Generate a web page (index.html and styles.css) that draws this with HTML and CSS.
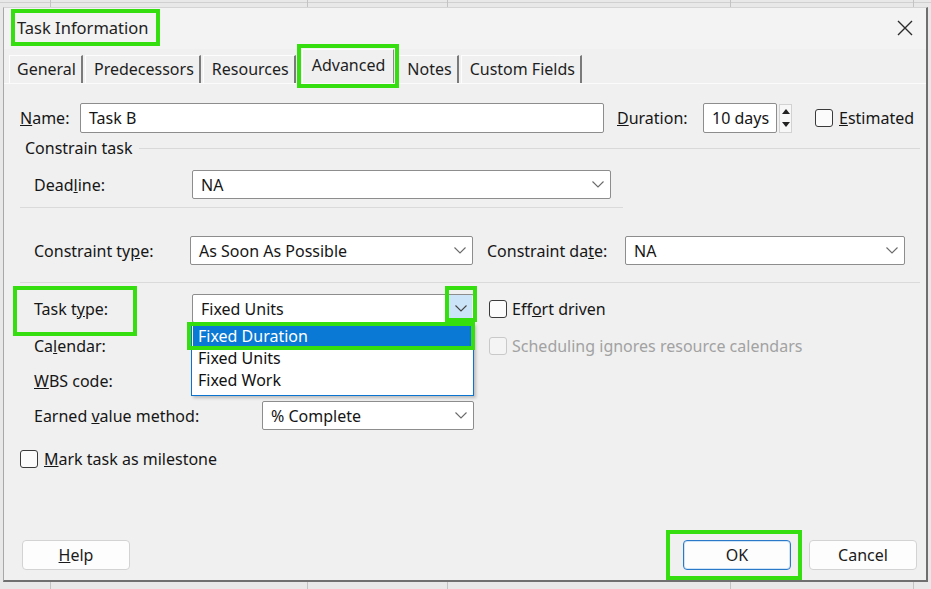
FILE: index.html
```html
<!DOCTYPE html>
<html>
<head>
    <title>Task Information</title>
    <link rel="stylesheet" href="styles.css">
</head>
<body>
  <div class="dialog">
    <div class="titlebar">
        <span class="title">Task Information</span>
        <span class="close">
            <svg width="16" height="16" viewBox="0 0 16 16"><path d="M1 1L15 15M15 1L1 15" stroke="#2b2b2b" stroke-width="1.4" fill="none"/></svg>
        </span>
    </div>

    <div class="tabs">
        <span class="tab first">General</span>
        <span class="tab">Predecessors</span>
        <span class="tab">Resources</span>
        <span class="tab active">Advanced</span>
        <span class="tab after-active">Notes</span>
        <span class="tab">Custom Fields</span>
    </div>

    <div class="panel">
        <!-- name / duration -->
        <div class="row name-row">
            <label class="lbl lbl-name"><u>N</u>ame:</label>
            <div class="field name-field">Task B</div>
            <label class="lbl lbl-duration"><u>D</u>uration:</label>
            <div class="field duration-field">10 days</div>
            <div class="spinner">
                <span class="spin-up"></span>
                <span class="spin-down"></span>
            </div>
            <span class="check estimated-check"></span>
            <span class="check-text"><u>E</u>stimated</span>
        </div>

        <div class="group-title"><span>Constrain task</span></div>

        <div class="row indent deadline-row">
            <label class="lbl lbl-158">Dead<u>l</u>ine:</label>
            <div class="select deadline-select">
                <span>NA</span>
                <svg class="chev" width="12" height="7" viewBox="0 0 12 7"><path d="M0.5 0.5l5.5 5.5 5.5-5.5" fill="none" stroke="#6a6a6a" stroke-width="1.1"/></svg>
            </div>
        </div>
        <div class="rule rule-short"></div>

        <div class="row indent constraint-row">
            <label class="lbl lbl-157">Constraint ty<u>p</u>e:</label>
            <div class="select sel-283">
                <span>As Soon As Possible</span>
                <svg class="chev" width="12" height="7" viewBox="0 0 12 7"><path d="M0.5 0.5l5.5 5.5 5.5-5.5" fill="none" stroke="#6a6a6a" stroke-width="1.1"/></svg>
            </div>
            <label class="lbl lbl-date">Constraint da<u>t</u>e:</label>
            <div class="select date-select">
                <span>NA</span>
                <svg class="chev" width="12" height="7" viewBox="0 0 12 7"><path d="M0.5 0.5l5.5 5.5 5.5-5.5" fill="none" stroke="#6a6a6a" stroke-width="1.1"/></svg>
            </div>
        </div>
        <div class="rule"></div>

        <div class="row indent tasktype-row">
            <label class="lbl lbl-158">Task t<u>y</u>pe:</label>
            <div class="select sel-282 open">
                <span>Fixed Units</span>
                <span class="drop-btn">
                    <svg width="12" height="7" viewBox="0 0 12 7"><path d="M0.5 0.5l5.5 5.5 5.5-5.5" fill="none" stroke="#444" stroke-width="1.1"/></svg>
                </span>
                <ul class="drop-list">
                    <li class="picked">Fixed Duration</li>
                    <li>Fixed Units</li>
                    <li>Fixed Work</li>
                </ul>
            </div>
            <span class="check side-check"></span>
            <span class="check-text">Eff<u>o</u>rt driven</span>
        </div>

        <div class="row indent calendar-row">
            <label class="lbl lbl-158">Ca<u>l</u>endar:</label>
            <div class="select sel-282"></div>
            <span class="check side-check disabled"></span>
            <span class="check-text disabled">Schedulin<u>g</u> ignores resource calendars</span>
        </div>

        <div class="row indent wbs-row">
            <label class="lbl lbl-158"><u>W</u>BS code:</label>
            <div class="field sel-282"></div>
        </div>

        <div class="row indent earned-row">
            <label class="lbl lbl-228">Earned <u>v</u>alue method:</label>
            <div class="select earned-select">
                <span>% Complete</span>
                <svg class="chev" width="12" height="7" viewBox="0 0 12 7"><path d="M0.5 0.5l5.5 5.5 5.5-5.5" fill="none" stroke="#6a6a6a" stroke-width="1.1"/></svg>
            </div>
        </div>

        <div class="row milestone-row">
            <span class="check"></span>
            <span class="check-text"><u>M</u>ark task as milestone</span>
        </div>
    </div>

    <div class="footer">
        <button type="button" class="btn"><u>H</u>elp</button>
        <span class="spacer"></span>
        <button type="button" class="btn btn-default">OK</button>
        <button type="button" class="btn btn-cancel">Cancel</button>
    </div>
  </div>
</body>
</html>
```

FILE: styles.css
```css
* {
    margin: 0;
    padding: 0;
    box-sizing: border-box;
}

body {
    width: 931px;
    height: 589px;
    overflow: hidden;
    padding: 7px 0 0 3px;
    font-family: "Noto Sans", "Open Sans", sans-serif;
    font-size: 16px;
    color: #161616;
    /* sheet grid showing behind the dialog */
    background-color: #e8e8e8;
    background-image:
        linear-gradient(#c3c3c3, #c3c3c3),
        linear-gradient(#c3c3c3, #c3c3c3),
        linear-gradient(#c3c3c3, #c3c3c3),
        linear-gradient(#c3c3c3, #c3c3c3),
        linear-gradient(#c3c3c3, #c3c3c3),
        linear-gradient(#d0d0d0, #d0d0d0);
    background-size: 1px 100%, 1px 100%, 1px 100%, 1px 100%, 1px 100%, 100% 1px;
    background-position: 50px 0, 307px 0, 447px 0, 730px 0, 913px 0, 0 2px;
    background-repeat: no-repeat;
}

.dialog {
    width: 925px;
    height: 575px;
    display: flex;
    flex-direction: column;
    background-color: #f0f0f0;
    border-top: 1px solid #d4d4d4;
    border-left: 1px solid #a8a8a8;
    border-right: 2px solid #6f6f6f;
    border-bottom: 2px solid #6f6f6f;
}

/* title bar */

.titlebar {
    height: 41px;
    display: flex;
    justify-content: space-between;
    align-items: flex-start;
    padding: 1px 13px 0 7px;
    background-color: #f3f3f3;
}

.title {
    height: 37px;
    line-height: 29px;
    padding: 0 8px 0 2px;
    font-size: 16.5px;
    color: #222;
    border: 4px solid #35de0e;
}

.close {
    margin-top: 11px;
    display: flex;
}

/* tab strip */

.tabs {
    height: 34px;
    display: flex;
    align-items: flex-end;
    padding-left: 5px;
}

.tab {
    height: 28px;
    line-height: 26px;
    padding: 0 5px 0 8px;
    margin-left: 2px;
    color: #1e1e1e;
    background-color: #f0f0f0;
    border-top: 1px solid #fdfdfd;
    border-left: 1px solid #fdfdfd;
    border-right: 2px solid #7a7a7a;
}

.tab.first {
    margin-left: 0;
    padding-left: 7px;
}

.tab.active {
    height: 34px;
    line-height: 31px;
    margin-left: 6px;
    padding: 0 8px 0 9px;
    border-right: 1px solid #8a8a8a;
    outline: 4px solid #35de0e;
    outline-offset: 1px;
    position: relative;
    z-index: 1;
}

.tab.after-active {
    margin-left: 4px;
    border-left-color: transparent;
}

.panel {
    flex: 1;
    border-top: 1px solid #fbfbfb;
    padding: 0 6px 0 16px;
}

/* rows */

.row {
    display: flex;
    align-items: center;
}

.indent {
    padding-left: 14px;
}

.lbl {
    flex-shrink: 0;
    white-space: nowrap;
}

.lbl-name { width: 60px; }
.lbl-duration { width: 86px; margin-left: 13px; }
.lbl-157 { width: 157px; }
.lbl-158 { width: 158px; }
.lbl-228 { width: 228px; }
.lbl-date { width: 138px; margin-left: 14px; }

.field,
.select {
    height: 29px;
    display: flex;
    align-items: center;
    padding: 0 8px;
    background-color: #fff;
    border: 1px solid #8d8d8d;
    border-radius: 2px;
    white-space: nowrap;
}

.select {
    justify-content: space-between;
    padding-right: 6px;
    position: relative;
}

.chev {
    flex-shrink: 0;
}

.name-row {
    margin-top: 19px;
    height: 30px;
}

.name-row .field {
    height: 30px;
}

.name-field { width: 524px; }
.duration-field { width: 74px; }

.spinner {
    width: 13px;
    height: 29px;
    margin-left: 2px;
    display: flex;
    flex-direction: column;
    border: 1px solid #d2d2d2;
    background-color: #f7f7f7;
}

.spin-up,
.spin-down {
    flex: 1;
    display: flex;
    align-items: center;
    justify-content: center;
}

.spin-up::after {
    content: "";
    border-left: 4px solid transparent;
    border-right: 4px solid transparent;
    border-bottom: 5px solid #222;
}

.spin-down::after {
    content: "";
    border-left: 4px solid transparent;
    border-right: 4px solid transparent;
    border-top: 5px solid #222;
}

.check {
    width: 18px;
    height: 18px;
    flex-shrink: 0;
    border: 1px solid #3a3a3a;
    border-radius: 3px;
    background-color: #fbfbfb;
}

.check.disabled {
    border-color: #c9c9c9;
    background-color: #f4f4f4;
}

.check-text {
    margin-left: 6px;
    white-space: nowrap;
}

.check-text.disabled {
    color: #a2a2a2;
}

.estimated-check {
    margin-left: 23px;
}

.group-title {
    margin-top: 5px;
    height: 20px;
    display: flex;
    align-items: center;
    padding-left: 5px;
}

.group-title::after {
    content: "";
    flex: 1;
    height: 1px;
    margin-left: 6px;
    background-color: #d9d9d9;
}

.deadline-row {
    margin-top: 12px;
}

.deadline-select { width: 419px; }
.sel-283 { width: 283px; }
.sel-282 { width: 282px; }
.date-select { width: 280px; }
.earned-select { width: 212px; }

.rule {
    height: 1px;
    margin-top: 17px;
    background-color: #dadada;
}

.rule-short {
    width: 603px;
    margin-top: 8px;
}

.constraint-row {
    margin-top: 28px;
}

.constraint-row .sel-283 {
    margin-left: -1px;
}

.tasktype-row {
    margin-top: 11px;
    position: relative;
    z-index: 2;
}

/* marker round the task type label */
.tasktype-row::before {
    content: "";
    position: absolute;
    left: -7px;
    top: -8px;
    width: 116px;
    height: 42px;
    border: 4px solid #35de0e;
}

.side-check {
    margin-left: 15px;
}

.tasktype-row .check-text,
.calendar-row .check-text {
    margin-left: 5px;
}

/* open drop-down on the task type box */

.select.open {
    padding-right: 1px;
}

.drop-btn {
    width: 23px;
    height: 27px;
    display: flex;
    align-items: center;
    justify-content: center;
    background-color: #cce4f7;
    position: relative;
}

.drop-btn::after {
    content: "";
    position: absolute;
    left: -4px;
    right: -5px;
    top: -9px;
    bottom: 0;
    border: 4px solid #35de0e;
}

.drop-list {
    list-style: none;
    position: absolute;
    left: -2px;
    top: 28px;
    width: 283px;
    height: 73px;
    padding-top: 2px;
    background-color: #fff;
    border: 1px solid #0b74d1;
    box-shadow: 2px 2px 3px rgba(0, 0, 0, 0.22);
}

.drop-list li {
    height: 22px;
    line-height: 21px;
    margin: 0 1px;
    padding-left: 5px;
    color: #111;
}

.drop-list li.picked {
    background-color: #0a78d5;
    color: #fff;
    position: relative;
}

.drop-list li.picked::after {
    content: "";
    position: absolute;
    left: -6px;
    right: -3px;
    top: -4px;
    bottom: -2px;
    border: 4px solid #35de0e;
}

.calendar-row {
    margin-top: 8px;
    height: 30px;
}

.wbs-row {
    margin-top: 5px;
    height: 30px;
}

.earned-row {
    margin-top: 5px;
}

.milestone-row {
    margin-top: 20px;
    height: 18px;
}

/* bottom buttons */

.footer {
    display: flex;
    align-items: center;
    padding: 0 9px 10px 18px;
}

.spacer {
    flex: 1;
}

.btn {
    width: 108px;
    height: 30px;
    font-family: inherit;
    font-size: 16px;
    color: #1b1b1b;
    background-color: #fdfdfd;
    border: 1px solid #d3d3d3;
    border-radius: 4px;
}

.btn-default {
    border: 1px solid #2a78c8;
    box-shadow: inset 0 0 0 1px #cfe3f7;
    position: relative;
}

.btn-default::after {
    content: "";
    position: absolute;
    left: -18px;
    right: -12px;
    top: -11px;
    bottom: -11px;
    border: 4px solid #35de0e;
}

.btn-cancel {
    margin-left: 18px;
}
```
